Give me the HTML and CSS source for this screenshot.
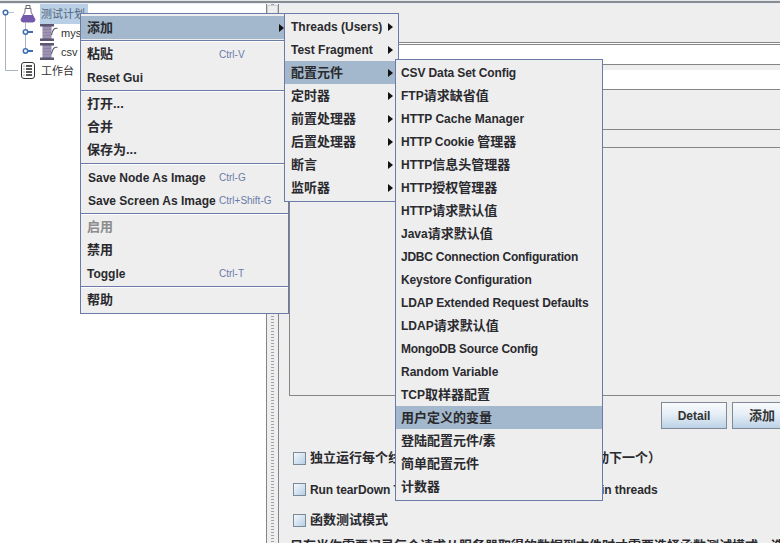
FILE: index.html
```html
<!DOCTYPE html>
<html lang="zh">
<head>
<meta charset="utf-8">
<title>JMeter</title>
<link rel="stylesheet" href="styles.css">
</head>
<body>
<div class="app">
  <div class="topbar"></div>
  <div class="main">
    <div class="tree">
      <div class="row">
        <svg class="conn-a" viewBox="0 0 20 19"><path d="M5.500 11v8" stroke="#a9b4c0" fill="none"/><path d="M8 8.500h6" stroke="#b5c4d6" fill="none"/><circle cx="5.500" cy="8.500" r="2.300" fill="#fff" stroke="#3f6fb0" stroke-width="1.500"/></svg>
        <svg class="icon" viewBox="0 0 16 19"><path d="M5 4.500V8L1 15.500Q1 18 3 18H13Q15 18 15 15.500L11 8V4.500Z" fill="#fff" stroke="#7a6a98"/><path d="M3.500 11H12.500L15 15.500Q15 18 13 18H3Q1 18 1 15.500Z" fill="#7458ae"/><path d="M6 1.500h4v3H6z" fill="#fff" stroke="#666"/></svg>
        <span class="label sel">测试计划</span>
      </div>
      <div class="row">
        <svg class="conn-b" viewBox="0 0 39 19"><path d="M5.500 0v19" stroke="#a9b4c0" fill="none"/><path d="M25.500 0v7" stroke="#a9b4c0" fill="none"/><path d="M25.500 11v8" stroke="#a9b4c0" fill="none"/><path d="M27 9h6" stroke="#3f6fb0" stroke-width="2" fill="none"/><circle cx="25.500" cy="9" r="2.200" fill="#fff" stroke="#3f6fb0" stroke-width="1.500"/></svg>
        <svg class="spool" viewBox="0 0 19 19"><path d="M3.500 2h9v14h-9z" fill="#8f84a6"/><path d="M4 5h8M4 8h8M4 11h8M4 14h8" stroke="#aaa0bc"/><path d="M1 1h14v2.500H1zM1 15.500h14v2.500H1z" fill="#5d5772"/><path d="M12.500 12Q14 4 18.500 5.500" fill="none" stroke="#5a5a6a" stroke-width="1.200"/></svg>
        <span class="label">mysql</span>
      </div>
      <div class="row">
        <svg class="conn-b" viewBox="0 0 39 19"><path d="M5.500 0v19" stroke="#a9b4c0" fill="none"/><path d="M25.500 0v7" stroke="#a9b4c0" fill="none"/><path d="M27 9h6" stroke="#3f6fb0" stroke-width="2" fill="none"/><circle cx="25.500" cy="9" r="2.200" fill="#fff" stroke="#3f6fb0" stroke-width="1.500"/></svg>
        <svg class="spool" viewBox="0 0 19 19"><path d="M3.500 2h9v14h-9z" fill="#8f84a6"/><path d="M4 5h8M4 8h8M4 11h8M4 14h8" stroke="#aaa0bc"/><path d="M1 1h14v2.500H1zM1 15.500h14v2.500H1z" fill="#5d5772"/><path d="M12.500 12Q14 4 18.500 5.500" fill="none" stroke="#5a5a6a" stroke-width="1.200"/></svg>
        <span class="label">csv</span>
      </div>
      <div class="row">
        <svg class="conn-a" viewBox="0 0 20 19"><path d="M5.500 0v9.500H18" stroke="#a9b4c0" fill="none"/></svg>
        <svg class="icon" viewBox="0 0 16 19"><rect x="1.500" y="1.500" width="13" height="16" rx="2.500" fill="#fff" stroke="#333"/><path d="M6 5h6M6 8h6M6 11h6M6 14h6" stroke="#222" stroke-width="1.500"/><path d="M3.500 5h1M3.500 8h1M3.500 11h1M3.500 14h1" stroke="#888" stroke-width="1.500"/></svg>
        <span class="label">工作台</span>
      </div>
    </div>
    <div class="splitter">
      <div class="grip"></div>
    </div>
    <div class="panel">
      <div class="field-top"></div>
      <div class="field first"></div>
      <div class="field second"></div>
      <div class="rule-a"></div>
      <div class="table-box"></div>
      <div class="buttons">
        <div class="btn detail">Detail</div>
        <div class="btn add"><span class="zh">添加</span></div>
      </div>
      <div class="check-row"><span class="check"></span><span class="zh">独立运行每个线程组（例如在一个组运行结束后启动下一个）</span></div>
      <div class="check-row"><span class="check"></span><span class="tight-a">Run tearDown Thread Groups after shutdown of main threads</span></div>
      <div class="check-row"><span class="check"></span><span class="zh">函数测试模式</span></div>
      <div class="note zh">只有当你需要记录每个请求从服务器取得的数据到文件时才需要选择函数测试模式。选择这个选项很影响性能。</div>
    </div>
  </div>

  <div class="menu m1">
    <div class="item on"><span class="text zh">添加</span><i class="arrow"></i></div>
    <div class="sep"></div>
    <div class="item"><span class="text zh">粘贴</span><span class="key">Ctrl-V</span></div>
    <div class="item"><span class="text">Reset Gui</span></div>
    <div class="sep"></div>
    <div class="item"><span class="text zh">打开...</span></div>
    <div class="item"><span class="text zh">合并</span></div>
    <div class="item"><span class="text zh">保存为...</span></div>
    <div class="sep"></div>
    <div class="item nudge"><span class="text">Save Node As Image</span><span class="key">Ctrl-G</span></div>
    <div class="item nudge"><span class="text">Save Screen As Image</span><span class="key">Ctrl+Shift-G</span></div>
    <div class="sep"></div>
    <div class="item off"><span class="text zh">启用</span></div>
    <div class="item"><span class="text zh">禁用</span></div>
    <div class="item"><span class="text">Toggle</span><span class="key">Ctrl-T</span></div>
    <div class="sep"></div>
    <div class="item"><span class="text zh">帮助</span></div>
  </div>

  <div class="menu m2">
    <div class="item"><span class="text">Threads (Users)</span><i class="arrow"></i></div>
    <div class="item"><span class="text">Test Fragment</span><i class="arrow"></i></div>
    <div class="item on"><span class="text zh">配置元件</span><i class="arrow"></i></div>
    <div class="item"><span class="text zh">定时器</span><i class="arrow"></i></div>
    <div class="item"><span class="text zh">前置处理器</span><i class="arrow"></i></div>
    <div class="item"><span class="text zh">后置处理器</span><i class="arrow"></i></div>
    <div class="item"><span class="text zh">断言</span><i class="arrow"></i></div>
    <div class="item"><span class="text zh">监听器</span><i class="arrow"></i></div>
  </div>

  <div class="menu m3">
    <div class="item"><span class="text tight-b">CSV Data Set Config</span></div>
    <div class="item"><span class="text zh"><span class="la">FTP</span>请求缺省值</span></div>
    <div class="item"><span class="text">HTTP Cache Manager</span></div>
    <div class="item"><span class="text zh"><span class="la tight-b">HTTP Cookie </span>管理器</span></div>
    <div class="item"><span class="text zh"><span class="la">HTTP</span>信息头管理器</span></div>
    <div class="item"><span class="text zh"><span class="la">HTTP</span>授权管理器</span></div>
    <div class="item"><span class="text zh"><span class="la">HTTP</span>请求默认值</span></div>
    <div class="item"><span class="text zh"><span class="la">Java</span>请求默认值</span></div>
    <div class="item"><span class="text tight-c">JDBC Connection Configuration</span></div>
    <div class="item"><span class="text tight-b">Keystore Configuration</span></div>
    <div class="item"><span class="text tight-b">LDAP Extended Request Defaults</span></div>
    <div class="item"><span class="text zh"><span class="la">LDAP</span>请求默认值</span></div>
    <div class="item"><span class="text tight-c">MongoDB Source Config</span></div>
    <div class="item"><span class="text">Random Variable</span></div>
    <div class="item"><span class="text zh"><span class="la">TCP</span>取样器配置</span></div>
    <div class="item on"><span class="text zh">用户定义的变量</span></div>
    <div class="item"><span class="text zh">登陆配置元件/素</span></div>
    <div class="item"><span class="text zh">简单配置元件</span></div>
    <div class="item"><span class="text zh">计数器</span></div>
  </div>
</div>
</body>
</html>
```
FILE: styles.css
```css
* { box-sizing: border-box; }
html, body { margin: 0; padding: 0; }
body {
  width: 780px;
  height: 543px;
  overflow: hidden;
  background: #eeeeee;
  color: #2a2a2e;
  font: bold 12px "Liberation Sans", "Noto Sans CJK SC", sans-serif;
}
.zh { font-size: 13px; line-height: 15px; margin-bottom: 2px; }
.m2 .zh, .m3 .zh, .btn .zh, .m1 .on .zh { margin-bottom: 0; }
.la { font-size: 12px; }
.tight-a { letter-spacing: -0.09px; }
.tight-b { letter-spacing: -0.12px; }
.tight-c { letter-spacing: -0.24px; }
.app {
  position: relative;
  width: 780px;
  height: 543px;
  display: flex;
  flex-direction: column;
  overflow: hidden;
}
.topbar {
  height: 4px;
  flex: none;
  border-top: 1px solid #e4e6e8;
  background: #858d92;
  border-bottom: 1px solid #e6edf5;
}
.main { flex: 1; display: flex; min-height: 0; }

/* tree */
.tree {
  width: 267px;
  flex: none;
  background: #fff;
  border-right: 1px solid #80868c;
}
.row { height: 19px; display: flex; align-items: center; font-weight: normal; font-size: 11px; color: #333; }
.conn-a { width: 20px; height: 19px; flex: none; }
.conn-b { width: 39px; height: 19px; flex: none; }
.icon { width: 16px; height: 19px; flex: none; }
.spool { width: 19px; height: 19px; flex: none; }
.label { margin-left: 5px; white-space: nowrap; line-height: 20px; }
.spool + .label { margin-left: 3px; }
.sel {
  background: #b8cfe5;
  color: #55657a;
  margin-left: 4px;
  padding: 0 3px 0 1px;
  width: 48px;
  height: 20px;
}

/* splitter */
.splitter {
  width: 12px;
  flex: none;
  background-color: #eeeeee;
  background-image: repeating-linear-gradient(to bottom, #9aa2aa 0 1px, #eeeeee 1px 3px);
  background-size: 3px 100%;
  background-position: 4px 0;
  background-repeat: no-repeat;
  border-right: 1px solid #80868c;
}
.grip {
  height: 12px;
  margin-top: 1px;
  background: #eeeeee;
  border: 1px solid #c8ced4;
}

/* right panel */
.panel { flex: 1; min-width: 0; overflow: hidden; background: #eeeeee; }
.field-top { height: 38px; }
.field { background: #fff; border-bottom: 1px solid #858585; }
.first { height: 23px; border-top: 3px double #858585; }
.second { height: 20px; margin-top: 5px; }
.rule-a { height: 40px; border-bottom: 1px solid #858585; }
.table-box {
  margin: 17px 0 0 10px;
  height: 249px;
  border: 1px solid #858585;
  border-right: 0;
}
.buttons { display: flex; gap: 5px; padding: 6px 0 0 382px; height: 47px; width: 560px; }
.btn {
  height: 27px;
  flex: none;
  display: flex;
  align-items: center;
  justify-content: center;
  color: #333;
  border: 1px solid #7f8a96;
  background: linear-gradient(to bottom, #f8fbfd 0%, #e6eef6 45%, #bcd2e7 100%);
}
.detail { width: 66px; }
.add { width: 60px; }
.check-row {
  height: 31px;
  display: flex;
  align-items: center;
  gap: 4px;
  padding-left: 14px;
  white-space: nowrap;
}
.check {
  width: 13px;
  height: 13px;
  flex: none;
  border: 1px solid #7a8a99;
  background: linear-gradient(135deg, #f4f8fb, #b8cfe5);
}
.note { margin: 3px 0 0 11px; white-space: nowrap; line-height: 14px; }

/* popup menus */
.menu {
  position: absolute;
  background: #eeeeee;
  border: 1px solid #6a7ba8;
}
.m1 { left: 80px; top: 13px; width: 209px; height: 301px; padding: 2px 0 1px; }
.m2 { left: 284px; top: 13px; width: 115px; height: 189px; padding: 1px 0 2px; }
.m3 { left: 395px; top: 59px; width: 208px; height: 442px; padding: 1px 0 2px; }
.item {
  height: 23px;
  display: flex;
  align-items: center;
  padding-left: 6px;
  white-space: nowrap;
}
.m3 .item { padding-left: 5px; }
.on { background: #a3b8cc; }
.off { color: #8c8c8c; }
.m1 .text { width: 132px; flex: none; }
.m1 .nudge .text { margin-left: 1px; width: 131px; }
.key { font-weight: normal; font-size: 10px; color: #6a7ba8; }
.arrow {
  width: 0;
  height: 0;
  margin-left: auto;
  border-left: 5px solid #111;
  border-top: 4.5px solid transparent;
  border-bottom: 4.5px solid transparent;
}
.m1 .arrow { margin-right: 4px; }
.m2 .arrow { margin-right: 5px; }
.sep {
  height: 1px;
  margin: 1px 0 2px;
  background: #6a7ba8;
  box-shadow: 0 1px 0 #fff;
}
```
